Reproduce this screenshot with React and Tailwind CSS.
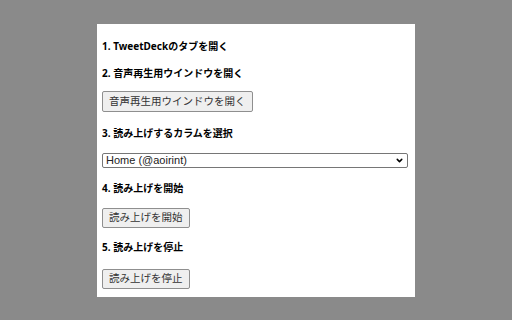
import { ChevronDown } from 'lucide-react'

const jp = { fontFamily: '"Noto Sans", "Noto Sans CJK JP", sans-serif' }

function Label({ className = '', children }) {
  return (
    <p className={`h-[14px] leading-[14px] text-[10px] font-bold text-black ${className}`}>
      {children}
    </p>
  )
}

function Btn({ className = '', children }) {
  return (
    <button
      className={`self-start px-[6px] border border-[#8f8f8f] rounded-[2px] bg-[#efefef]
                  text-[10.5px] leading-none text-[#333] ${className}`}
    >
      {children}
    </button>
  )
}

export default function App() {
  return (
    <div className="w-[512px] h-[320px] bg-[#8a8a8a] flex items-center justify-center" style={jp}>
      <div className="w-[318px] h-[273px] bg-white pl-[5px] pr-[7px] flex flex-col">

        <Label className="mt-[15px]">1. TweetDeckのタブを開く</Label>
        <Label className="mt-[13px]">2. 音声再生用ウインドウを開く</Label>
        <Btn className="mt-[11px] h-[21px]">音声再生用ウインドウを開く</Btn>

        <Label className="mt-[14px]">3. 読み上げするカラムを選択</Label>
        {/* column picker */}
        <div className="relative mt-[13px] h-[15px]">
          <select
            className="block appearance-none w-full h-[15px] border border-[#767676] rounded-[2px] bg-white
                       pl-[3px] py-0 text-[11px] leading-[13px] text-[#222]"
            style={{ fontFamily: '"Liberation Sans", Arial, sans-serif' }}
          >
            <option>Home (@aoirint)</option>
          </select>
          <ChevronDown
            size={9}
            strokeWidth={4}
            className="absolute right-[4px] top-[3px] text-black pointer-events-none"
          />
        </div>

        <Label className="mt-[13px]">4. 読み上げを開始</Label>
        <Btn className="mt-[13px] h-[20px]">読み上げを開始</Btn>

        <Label className="mt-[12px]">5. 読み上げを停止</Label>
        <Btn className="mt-[15px] h-[20px]">読み上げを停止</Btn>

      </div>
    </div>
  )
}
